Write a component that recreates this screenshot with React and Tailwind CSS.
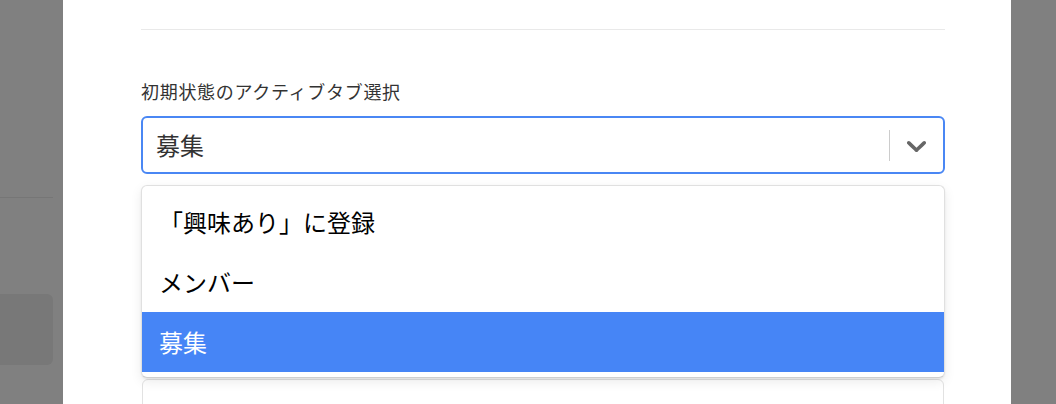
import React from 'react';

const options = ['「興味あり」に登録', 'メンバー', '募集'];

const ChevronDown = () => (
  <svg width="33" height="33" viewBox="0 0 20 20" fill="#666">
    <path d="M4.516 7.548c0.436-0.446 1.043-0.481 1.576 0l3.908 3.747 3.908-3.747c0.533-0.481 1.141-0.446 1.574 0 0.436 0.445 0.408 1.197 0 1.615-0.406 0.418-4.695 4.502-4.695 4.502-0.217 0.223-0.502 0.335-0.787 0.335s-0.57-0.112-0.789-0.335c0 0-4.287-4.084-4.695-4.502s-0.436-1.17 0-1.615z" />
  </svg>
);

const App = () => {
  const selected = '募集';

  return (
    <div
      className="flex h-[404px] w-[1056px] overflow-hidden bg-[#808080]"
      style={{ fontFamily: '"Noto Sans CJK JP", "Noto Sans", sans-serif' }}
    >
      {/* page behind the overlay */}
      <div className="flex w-[63px] shrink-0 flex-col">
        <div className="mt-[197px] h-px w-[53px] bg-[#767676]" />
        <div className="mt-[96px] h-[71px] w-[53px] rounded-r-[6px] bg-[#787878]" />
      </div>

      {/* modal */}
      <div className="w-[948px] shrink-0 bg-white pl-[78px]">
        <div className="w-[804px] pt-[29px]">
          <div className="h-px bg-[#e9e9e9]" />

          <label className="mt-[48px] block text-[18px] leading-[26px] tracking-[0.7px] text-[#333]">
            初期状態のアクティブタブ選択
          </label>

          {/* select control */}
          <div className="mt-[12px] flex h-[58px] items-center rounded-[6px] border-2 border-[#4a87f4] bg-white">
            <div className="flex-1 pl-[13px] text-[24px] leading-none text-[#333]">{selected}</div>
            <div className="h-[31px] w-px bg-[#cccccc]" />
            <div className="flex w-[53px] items-center justify-center">
              <ChevronDown />
            </div>
          </div>

          {/* menu */}
          <div className="relative z-10 mt-[11px] rounded-[6px] border border-[#e0e0e0] border-b-[#cfcfcf] bg-white pt-[6px] pb-[5px] shadow-[0_1px_2px_rgba(0,0,0,0.08),0_4px_12px_rgba(0,0,0,0.08)]">
            {options.map((opt) => (
              <div
                key={opt}
                className={`flex h-[60px] items-center px-[17px] text-[24px] leading-none ${
                  opt === selected ? 'bg-[#4685f6] text-white' : 'text-black'
                }`}
              >
                {opt}
              </div>
            ))}
          </div>

          {/* next field, partly hidden */}
          <div className="mt-[1px] ml-px h-[40px] w-[802px] rounded-t-[6px] border border-[#e2e2e2] bg-white" />
        </div>
      </div>
    </div>
  );
};

export default App;
